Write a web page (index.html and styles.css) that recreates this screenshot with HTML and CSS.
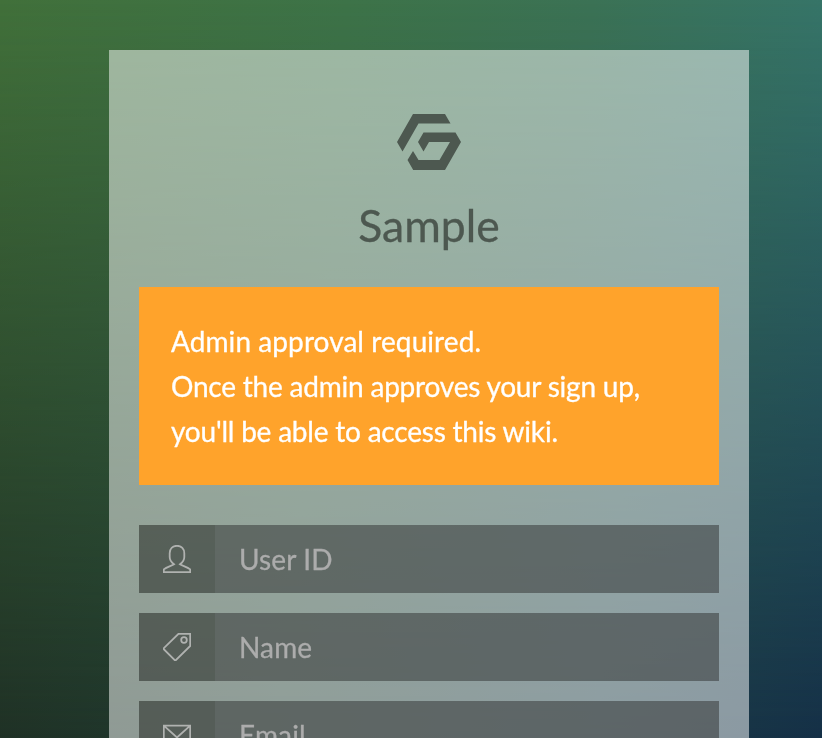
FILE: index.html
```
<!DOCTYPE html>
<html lang="en">
<head>
<meta charset="utf-8">
<title>Sample</title>
<link rel="stylesheet" href="styles.css">
</head>
<body>
<main class="panel">
  <header class="brand">
    <svg class="logo" viewBox="0 0 64 56" aria-hidden="true">
      <path d="M0 28 16 0H48L53.5 9.500H21.500L5.500 37.500Z"/>
      <path d="M26.500 18.500H58.500L64 28 48 56H16.200L10.500 46 16 37 21.500 46H42.500L53 28H32L26.500 37.500 21 28Z"/>
    </svg>
    <h1 class="title">Sample</h1>
  </header>
  <p class="notice"><span class="lead">Admin approval required.</span><br>Once the admin approves your sign up,<br>you'll be able to access this wiki.</p>
  <form class="fields">
    <label class="field">
      <span class="addon"><svg class="icon" viewBox="0 0 28 28"><path d="M14 .8C9.500.8 6.700 3.800 6.700 8.200V12c0 2.800 1.500 5.300 4.300 7.200-2.100 1.600-7.300 2.600-10.200 5.200v2.800h26.400v-2.800c-2.900-2.600-8.100-3.600-10.200-5.200 2.800-1.900 4.300-4.400 4.300-7.200V8.200C21.300 3.800 18.500.8 14 .8Z"/></svg></span>
      <input class="input" type="text" placeholder="User ID">
    </label>
    <label class="field">
      <span class="addon"><svg class="icon" viewBox="0 0 28 28"><path d="M15.500.8H27.200V13L12.800 27.200H11.800L.8 16.200V15.200Z"/><circle cx="21" cy="7" r="2.800"/></svg></span>
      <input class="input" type="text" placeholder="Name">
    </label>
    <label class="field">
      <span class="addon"><svg class="icon" viewBox="0 0 28 28"><path d="M.8 4.600H27.200V23.400H.8ZM.8 4.600 14 16.500 27.200 4.600"/></svg></span>
      <input class="input" type="email" placeholder="Email">
    </label>
  </form>
</main>
</body>
</html>
```
FILE: styles.css
```
* {
  box-sizing: border-box;
}

html,
body {
  height: 100%;
  margin: 0;
}

body {
  overflow: hidden;
  padding-top: 50px;
  font-family: Lato, "Liberation Sans", sans-serif;
  background: linear-gradient(97deg, #1f2e22 0%, #203b31 40%, #1b3a43 75%, #153047 100%);
}

body::before {
  content: "";
  position: fixed;
  inset: 0;
  z-index: -1;
  background: linear-gradient(97deg, #41703a 0%, #3d7348 38%, #3b7255 65%, #34756f 100%);
  mask-image: linear-gradient(#000, transparent);
}

.panel {
  width: 640px;
  height: 100%;
  margin-left: 109px;
  padding: 64px 30px 0;
  overflow: hidden;
  background: rgba(255, 255, 255, 0.5);
}

.brand {
  display: flex;
  flex-direction: column;
  align-items: center;
  color: #4d5850;
}

.logo {
  width: 64px;
  height: 56px;
  fill: currentColor;
}

.title {
  margin: 28px 0 35px;
  font-size: 44.5px;
  font-weight: 400;
  line-height: 54px;
  -webkit-text-stroke: 0.3px;
}

.notice {
  height: 198px;
  margin: 0 0 40px;
  padding: 32px;
  color: #fff;
  background: #ffa32b;
  font-size: 28px;
  line-height: 45px;
  letter-spacing: -0.21px;
  -webkit-text-stroke: 0.3px;
}

.lead {
  letter-spacing: 0.08px;
}

.fields {
  display: flex;
  flex-direction: column;
  gap: 20px;
}

.field {
  display: flex;
  flex-shrink: 0;
  height: 68px;
}

.addon {
  display: grid;
  place-items: center;
  width: 76px;
  background: rgba(46, 52, 47, 0.6);
}

.icon {
  width: 28px;
  height: 28px;
  fill: none;
  stroke: #b0b2b0;
  stroke-width: 1.8;
}

.input {
  flex: 1;
  min-width: 0;
  padding: 0 24px;
  border: 0;
  border-radius: 0;
  background: rgba(50, 52, 51, 0.52);
  color: #aaa;
  font: 28px Lato, "Liberation Sans", sans-serif;
  letter-spacing: 0.15px;
}

.input::placeholder {
  color: #acacac;
  -webkit-text-stroke: 0.3px;
}
```
